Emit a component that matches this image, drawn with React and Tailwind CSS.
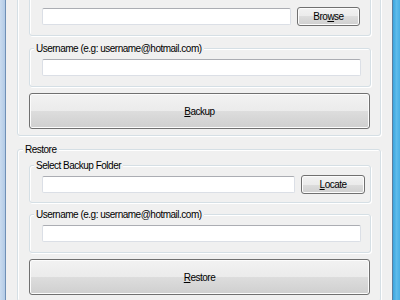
import React from 'react';

// Win7-style groupbox: light border with the caption sitting over the top line
function Group({ label, labelLeft, className, children }) {
  return (
    <div className={`relative rounded-[3px] border border-[#d5dfe5] shadow-[inset_1px_1px_0_#ffffff,1px_1px_0_#ffffff] ${className}`}>
      {label && (
        <span className={`absolute top-[-7px] bg-[#f0f0f0] px-[2px] leading-[13px] ${labelLeft}`}>{label}</span>
      )}
      {children}
    </div>
  );
}

function TextBox({ className }) {
  return (
    <div className={`h-[17px] rounded-[2px] border border-[#dbdfe6] border-t-[#abadb3] bg-white ${className}`} />
  );
}

function Button({ children, className }) {
  return (
    <button
      type="button"
      className={`flex items-center justify-center rounded-[3px] border border-[#707070] bg-[linear-gradient(to_bottom,#f2f2f2_0%,#ebebeb_50%,#dddddd_50%,#cfcfcf_100%)] leading-[13px] text-black shadow-[inset_0_0_0_1px_#fcfcfc] ${className}`}
    >
      {children}
    </button>
  );
}

export default function App() {
  return (
    <div className="flex h-[300px] w-[400px] overflow-hidden bg-[#f0f0f0] font-['Liberation_Sans',Arial,sans-serif] text-[10px] tracking-[-0.5px] text-black">
      <div className="w-[5px] shrink-0 bg-[linear-gradient(to_right,#c9dbef,#b3cbe6)]" />
      <div className="w-[1px] shrink-0 bg-[#6f90b6]" />

      <div className="flex-1 overflow-hidden px-[11px]">
        {/* Backup - scrolled, its captions are above the visible area */}
        <Group className="mt-[-17px] pt-[11px] pr-[9px] pb-[6px] pl-[11px]">
          <Group className="pt-[11px] pr-[10px] pb-[9px] pl-[12px]">
            <div className="flex h-[19px] items-center">
              <TextBox className="w-[249px]" />
              <Button className="ml-[6px] h-[19px] w-[63px]">
                <span>Bro<u>w</u>se</span>
              </Button>
            </div>
          </Group>
          <Group label="Username (e.g: username@hotmail.com)" labelLeft="left-[4px]" className="mt-[12px] pt-[10px] pr-[9px] pb-[10px] pl-[12px]">
            <TextBox className="w-[319px]" />
          </Group>
          <Button className="mt-[6px] h-[36px] w-[341px]">
            <span><u>B</u>ackup</span>
          </Button>
        </Group>

        {/* Restore */}
        <Group label="Restore" labelLeft="left-[5px]" className="mt-[13px] pt-[15px] pr-[9px] pb-[6px] pl-[11px]">
          <Group label="Select Backup Folder" labelLeft="left-[4px]" className="pt-[9px] pr-[5px] pb-[8px] pl-[12px]">
            <div className="flex h-[19px] items-center">
              <TextBox className="w-[254px]" />
              <Button className="ml-[6px] h-[19px] w-[64px]">
                <span><u>L</u>ocate</span>
              </Button>
            </div>
          </Group>
          <Group label="Username (e.g: username@hotmail.com)" labelLeft="left-[4px]" className="mt-[11px] pt-[10px] pr-[9px] pb-[10px] pl-[12px]">
            <TextBox className="w-[319px]" />
          </Group>
          <Button className="mt-[6px] h-[36px] w-[341px]">
            <span><u>R</u>estore</span>
          </Button>
        </Group>
      </div>

      <div className="w-[1px] shrink-0 bg-[#5f7f9e]" />
      <div className="w-[7px] shrink-0 bg-[linear-gradient(to_right,#3aa5df,#5fbbea,#48afe4)]" />
    </div>
  );
}
